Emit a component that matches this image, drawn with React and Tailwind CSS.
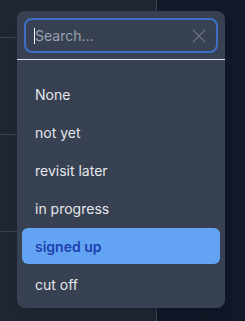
import React from "react";
import { X } from "lucide-react";

const options = ["None", "not yet", "revisit later", "in progress", "signed up", "cut off"];

const App = () => {
  const selected = "signed up";

  return (
    <div className="relative flex w-[245px] h-[321px] overflow-hidden font-['Inter',sans-serif]">
      <div className="w-[157px] h-full bg-[#1f2733] border-r border-[#3b4453]">
        <div className="h-[38px] border-b border-[#3b4453]" />
        <div className="h-[97px] border-b border-[#3b4453]" />
        <div className="h-[97px] border-b border-[#3b4453]" />
      </div>
      <div className="flex-1 h-full bg-[#111827]" />

      <div className="absolute left-[17px] top-[11px] w-[208px] h-[297px] rounded-lg bg-[#374151] shadow-lg">
        <div className="px-[7px] pt-[7px]">
          <div className="flex items-center h-[35px] rounded-lg border-2 border-[#3b6fc6] pl-[8px] pr-[5px]">
            <span className="w-px h-[16px] bg-white" />
            <span className="flex-1 text-[14px] text-[#9ca3af] leading-none">Search...</span>
            <X size={24} strokeWidth={1.1} className="text-[#6b7280]" />
          </div>
        </div>
        <div className="mt-[6px] h-px bg-[#e5e7eb]" />
        <ul className="mt-[16px] px-[5px] flex flex-col gap-[2px]">
          {options.map((o) => (
            <li
              key={o}
              className={
                o === selected
                  ? "h-[36px] flex items-center px-[13px] rounded-md bg-[#62a4f3] text-[#1e40af] text-[14px] font-semibold"
                  : "h-[36px] flex items-center px-[13px] rounded-md text-[#e5e7eb] text-[14px]"
              }
            >
              {o}
            </li>
          ))}
        </ul>
      </div>
    </div>
  );
};

export default App;
